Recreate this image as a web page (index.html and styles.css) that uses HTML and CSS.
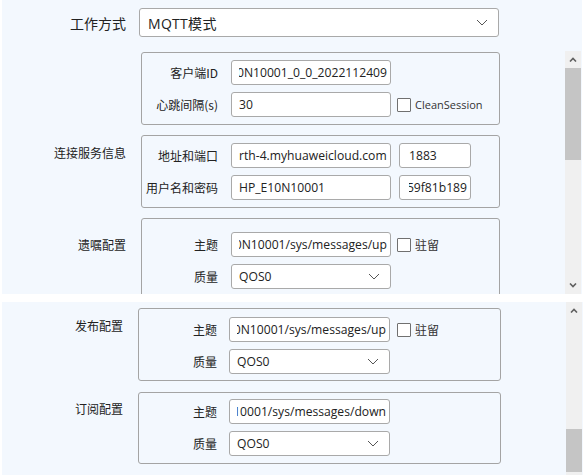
FILE: index.html
```html
<!DOCTYPE html>
<html lang="zh-CN">
<head>
<meta charset="utf-8">
<title>MQTT</title>
<link rel="stylesheet" href="styles.css">
</head>
<body>
<div class="shot shot-top">
  <div class="mode-row">
    <div class="mode-label">工作方式</div>
    <div class="input select select-mode">
      <span class="mode-text">MQTT模式</span>
      <svg width="12" height="7" viewBox="0 0 12 7"><path d="M1 1 L6 6 L11 1" fill="none" stroke="#555" stroke-width="1"/></svg>
    </div>
  </div>
  <div class="scroll">
    <div class="scroll-content">
      <div class="group-row">
        <div class="group-label"></div>
        <div class="group pt7">
          <div class="field">
            <span class="field-label">客户端ID</span>
            <div class="input"><div class="text clip"><span>0N10001_0_0_2022112409</span></div></div>
          </div>
          <div class="field">
            <span class="field-label">心跳间隔(s)</span>
            <div class="input"><div class="text"><span>30</span></div></div>
            <span class="check"></span><span class="check-label">CleanSession</span>
          </div>
        </div>
      </div>
      <div class="group-row">
        <div class="group-label lp9">连接服务信息</div>
        <div class="group pt7">
          <div class="field">
            <span class="field-label">地址和端口</span>
            <div class="input"><div class="text"><span>rth-4.myhuaweicloud.com</span></div></div>
            <div class="input port"><div class="text"><span>1883</span></div></div>
          </div>
          <div class="field">
            <span class="field-label">用户名和密码</span>
            <div class="input"><div class="text"><span>HP_E10N10001</span></div></div>
            <div class="input port"><div class="text clip"><span>59f81b189</span></div></div>
          </div>
        </div>
      </div>
      <div class="group-row">
        <div class="group-label lp18">遗嘱配置</div>
        <div class="group pt13">
          <div class="field">
            <span class="field-label">主题</span>
            <div class="input"><div class="text clip"><span>0N10001/sys/messages/up</span></div></div>
            <span class="check"></span><span class="check-label cjk">驻留</span>
          </div>
          <div class="field">
            <span class="field-label">质量</span>
            <div class="input select"><span>QOS0</span><svg width="12" height="7" viewBox="0 0 12 7"><path d="M1 1 L6 6 L11 1" fill="none" stroke="#555" stroke-width="1"/></svg></div>
          </div>
        </div>
      </div>
    </div>
    <div class="scrollbar">
      <div class="sb-btn"><svg width="8" height="5" viewBox="0 0 8 5"><path d="M1 4.5 L4 1.5 L7 4.5" fill="none" stroke="#606060" stroke-width="1.6"/></svg></div>
      <div class="sb-thumb thumb-top"></div>
      <div class="sb-track"></div>
      <div class="sb-btn"><svg width="8" height="5" viewBox="0 0 8 5"><path d="M1 0.5 L4 3.5 L7 0.5" fill="none" stroke="#606060" stroke-width="1.6"/></svg></div>
    </div>
  </div>
</div>

<div class="shot shot-bottom">
  <div class="scroll">
    <div class="scroll-content bottom-content">
      <div class="group-row">
        <div class="group-label lp9">发布配置</div>
        <div class="group pt8 pb6">
          <div class="field">
            <span class="field-label">主题</span>
            <div class="input"><div class="text clip"><span>0N10001/sys/messages/up</span></div></div>
            <span class="check"></span><span class="check-label cjk">驻留</span>
          </div>
          <div class="field">
            <span class="field-label">质量</span>
            <div class="input select"><span>QOS0</span><svg width="12" height="7" viewBox="0 0 12 7"><path d="M1 1 L6 6 L11 1" fill="none" stroke="#555" stroke-width="1"/></svg></div>
          </div>
        </div>
      </div>
      <div class="group-row">
        <div class="group-label lp8">订阅配置</div>
        <div class="group pt6">
          <div class="field">
            <span class="field-label">主题</span>
            <div class="input"><div class="text clip"><span>10001/sys/messages/down</span></div></div>
          </div>
          <div class="field">
            <span class="field-label">质量</span>
            <div class="input select"><span>QOS0</span><svg width="12" height="7" viewBox="0 0 12 7"><path d="M1 1 L6 6 L11 1" fill="none" stroke="#555" stroke-width="1"/></svg></div>
          </div>
        </div>
      </div>
    </div>
    <div class="scrollbar scrollbar-bottom">
      <div class="sb-btn sb-btn-small"><svg width="8" height="5" viewBox="0 0 8 5"><path d="M1 4.5 L4 1.5 L7 4.5" fill="none" stroke="#606060" stroke-width="1.6"/></svg></div>
      <div class="sb-track"></div>
      <div class="sb-thumb thumb-bottom"></div>
    </div>
  </div>
</div>
</body>
</html>
```

FILE: styles.css
```css
html, body {
  margin: 0;
  padding: 0;
  background: #ffffff;
}

body {
  font-family: "Open Sans", "Noto Sans CJK SC", sans-serif;
  color: #222222;
}

.shot {
  background: #f3f8fe;
  margin-left: 2px;
  overflow: hidden;
  display: flex;
  flex-direction: column;
}

.shot-top {
  width: 580px;
  height: 294px;
}

.shot-bottom {
  width: 581px;
  height: 173px;
  margin-top: 8px;
}

.mode-row {
  display: flex;
  align-items: center;
  margin-top: 8px;
  height: 29px;
  margin-bottom: 14px;
  flex-shrink: 0;
}

.mode-label {
  width: 124px;
  margin-right: 13px;
  text-align: right;
  font-family: "Noto Sans CJK SC", sans-serif;
  font-size: 14px;
}

.scroll {
  flex: 1;
  min-height: 0;
  display: flex;
  padding-right: 1px;
}

.scroll-content {
  flex: 1;
  min-width: 0;
  display: flex;
  flex-direction: column;
  gap: 10px;
  padding-top: 1px;
}

.bottom-content {
  padding-top: 6px;
  gap: 11px;
}

.group-row {
  display: grid;
  grid-template-columns: 124px 359px;
  column-gap: 15px;
  flex-shrink: 0;
}

.shot-bottom .group-row {
  grid-template-columns: 121px 363px;
}

.group-label {
  text-align: right;
  font-family: "Noto Sans CJK SC", sans-serif;
  font-size: 12px;
  line-height: 18px;
}

.lp8 { padding-top: 8px; }
.lp9 { padding-top: 9px; }
.lp18 { padding-top: 18px; }

.group {
  border: 1px solid #a4a4a4;
  border-radius: 3px;
  padding: 7px 0 7px 0;
  display: flex;
  flex-direction: column;
  gap: 7px;
}

.pt6 { padding-top: 6px; }
.pt7 { padding-top: 7px; }
.pt8 { padding-top: 8px; }
.pt13 { padding-top: 13px; }
.pb6 { padding-bottom: 6px; }

.field {
  display: flex;
  align-items: center;
  height: 25px;
}

.field-label {
  width: 76px;
  margin-right: 13px;
  flex-shrink: 0;
  text-align: right;
  font-size: 12px;
  font-family: "Noto Sans CJK SC", sans-serif;
}

.shot-bottom .field-label {
  width: 78px;
  margin-right: 12px;
}

.input {
  width: 160px;
  height: 25px;
  flex-shrink: 0;
  box-sizing: border-box;
  border: 1px solid #a9a9a9;
  border-radius: 3px;
  background: #ffffff;
  padding: 0 3px 0 7px;
  display: flex;
  align-items: center;
  font-size: 12.15px;
  white-space: nowrap;
}

.shot-bottom .input {
  width: 161px;
}

.input.select-mode {
  width: 360px;
  height: 29px;
  font-size: 14px;
  padding-left: 8px;
}

.mode-text {
  letter-spacing: 0.3px;
}

.text {
  flex: 1;
  min-width: 0;
  overflow: hidden;
  display: flex;
}

.text span {
  flex-shrink: 0;
}

.text.clip {
  justify-content: flex-end;
}

.input.port {
  width: 72px;
  margin-left: 8px;
  padding-left: 9px;
}

.input.select {
  justify-content: space-between;
  padding-right: 10px;
}

.check {
  width: 14px;
  height: 14px;
  box-sizing: border-box;
  border: 1.5px solid #707070;
  border-radius: 1px;
  background: #ffffff;
  margin-left: 6px;
  flex-shrink: 0;
}

.shot-bottom .check {
  margin-left: 7px;
}

.check-label {
  margin-left: 4px;
  font-size: 11px;
  color: #333333;
}

.check-label.cjk {
  font-family: "Noto Sans CJK SC", sans-serif;
  font-size: 12px;
}

.scrollbar {
  width: 16px;
  flex-shrink: 0;
  display: flex;
  flex-direction: column;
  background: #f0f0f0;
}

.sb-btn {
  height: 17px;
  flex-shrink: 0;
  display: flex;
  align-items: center;
  justify-content: center;
}

.sb-btn-small {
  height: 16px;
}

.sb-thumb {
  background: #c5c5c5;
  flex-shrink: 0;
}

.thumb-top {
  height: 92px;
}

.thumb-bottom {
  height: 43px;
  margin-bottom: 3px;
}

.sb-track {
  flex: 1;
}
```
